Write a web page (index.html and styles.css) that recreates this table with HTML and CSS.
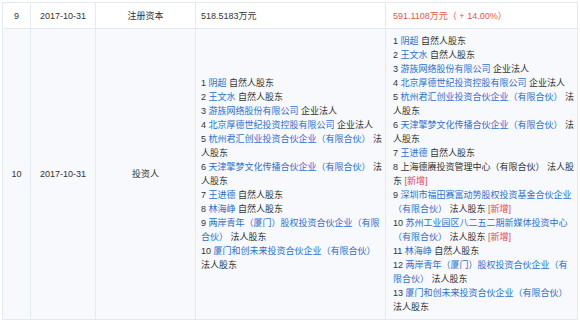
FILE: index.html
```html
<!DOCTYPE html>
<html lang="zh-CN">
<head>
<meta charset="utf-8">
<link rel="stylesheet" href="styles.css">
</head>
<body>
<table class="log">
  <colgroup>
    <col class="c-no"><col class="c-date"><col class="c-type"><col class="c-before"><col class="c-after">
  </colgroup>
  <tr class="row row-plain">
    <td class="center">9</td>
    <td class="center">2017-10-31</td>
    <td class="center">注册资本</td>
    <td class="before">518.5183万元</td>
    <td class="after"><span class="up">591.1108万元（ + 14.00%）</span></td>
  </tr>
  <tr class="row row-alt">
    <td class="center">10</td>
    <td class="center">2017-10-31</td>
    <td class="center">投资人</td>
    <td class="before">
      <div class="item">1 <a class="name">阴超</a> 自然人股东</div>
      <div class="item">2 <a class="name">王文水</a> 自然人股东</div>
      <div class="item">3 <a class="name">游族网络股份有限公司</a> 企业法人</div>
      <div class="item">4 <a class="name">北京厚德世纪投资控股有限公司</a> 企业法人</div>
      <div class="item">5 <a class="name">杭州君汇创业投资合伙企业（有限合伙）</a> 法人股东</div>
      <div class="item">6 <a class="name">天津擎梦文化传播合伙企业（有限合伙）</a> 法人股东</div>
      <div class="item">7 <a class="name">王进德</a> 自然人股东</div>
      <div class="item">8 <a class="name">林海峥</a> 自然人股东</div>
      <div class="item">9 <a class="name">两岸青年（厦门）股权投资合伙企业（有限合伙）</a> 法人股东</div>
      <div class="item">10 <a class="name">厦门和创未来投资合伙企业（有限合伙）</a> 法人股东</div>
    </td>
    <td class="after">
      <div class="item">1 <a class="name">阴超</a> 自然人股东</div>
      <div class="item">2 <a class="name">王文水</a> 自然人股东</div>
      <div class="item">3 <a class="name">游族网络股份有限公司</a> 企业法人</div>
      <div class="item">4 <a class="name">北京厚德世纪投资控股有限公司</a> 企业法人</div>
      <div class="item">5 <a class="name">杭州君汇创业投资合伙企业（有限合伙）</a> 法人股东</div>
      <div class="item">6 <a class="name">天津擎梦文化传播合伙企业（有限合伙）</a> 法人股东</div>
      <div class="item">7 <a class="name">王进德</a> 自然人股东</div>
      <div class="item">8 上海德赓投资管理中心（有限合伙） 法人股东 <span class="new">[新增]</span></div>
      <div class="item">9 <a class="name">深圳市福田赛富动势股权投资基金合伙企业（有限合伙）</a> 法人股东 <span class="new">[新增]</span></div>
      <div class="item">10 <a class="name">苏州工业园区八二五二期新媒体投资中心（有限合伙）</a> 法人股东 <span class="new">[新增]</span></div>
      <div class="item">11 <a class="name">林海峥</a> 自然人股东</div>
      <div class="item">12 <a class="name">两岸青年（厦门）股权投资合伙企业（有限合伙）</a> 法人股东</div>
      <div class="item">13 <a class="name">厦门和创未来投资合伙企业（有限合伙）</a> 法人股东</div>
    </td>
  </tr>
</table>
</body>
</html>
```
FILE: styles.css
```css
html, body {
  margin: 0;
  padding: 0;
  background: #ffffff;
}

body {
  font-family: "Liberation Sans", "Noto Sans CJK SC", sans-serif;
  font-size: 9px;
  line-height: 14px;
  color: #333333;
}

.log {
  margin: 2px 0 0 2px;
  border-collapse: collapse;
  table-layout: fixed;
  width: 575px;
}

.c-no { width: 28px; }
.c-date { width: 65px; }
.c-type { width: 100px; }
.c-before { width: 190px; }
.c-after { width: 192px; }

.log td {
  border: 1px solid #e3eaf2;
  padding: 0;
  vertical-align: middle;
}

.row-plain { height: 26px; }
.row-plain td { background: #ffffff; }

.row-alt { height: 290px; }
.row-alt td { background: #f7f9fc; }

.center { text-align: center; }

.before {
  padding: 5px 1px 5px 5px !important;
}

.after {
  padding: 5px 2px 5px 7px !important;
}

.name {
  color: #2c6fd3;
  text-decoration: none;
}

.up {
  color: #e8553f;
}

.new {
  color: #e84848;
}
```
